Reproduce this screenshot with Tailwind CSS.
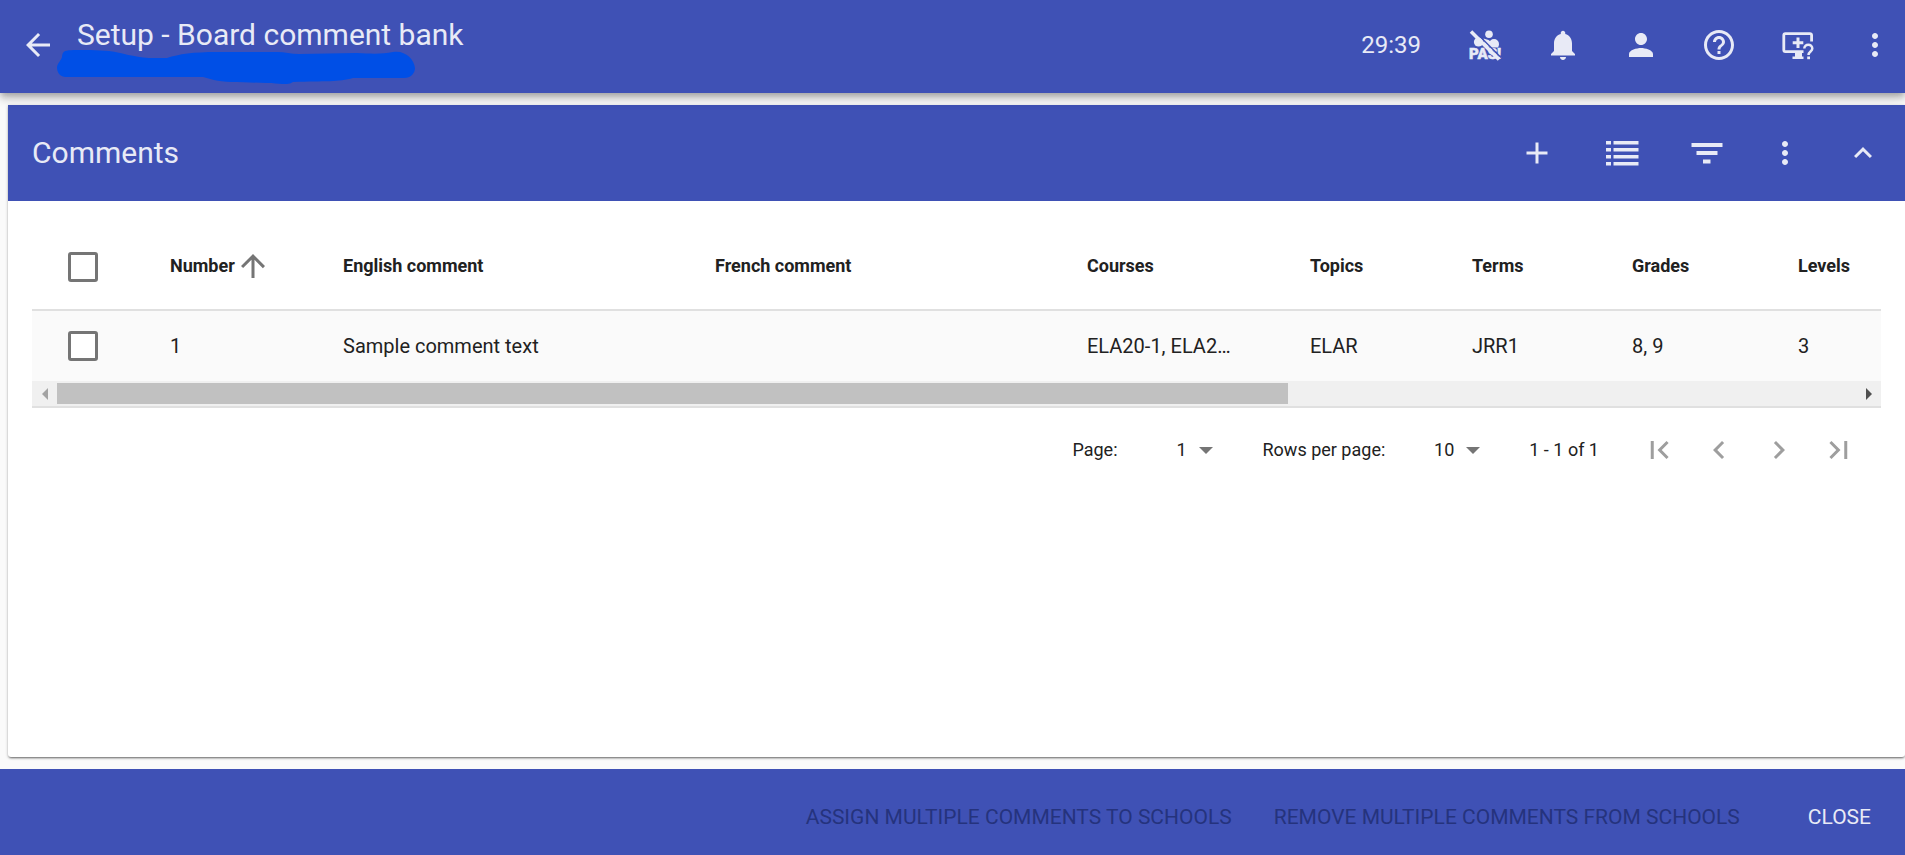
<!DOCTYPE html>
<html lang="en">
<head>
<meta charset="utf-8">
<meta name="viewport" content="width=device-width, initial-scale=1">
<title>Setup - Board comment bank</title>
<script src="https://cdn.jsdelivr.net/npm/@tailwindcss/browser@4"></script>
</head>
<body class="flex min-h-screen flex-col bg-[#fafafa] font-[Roboto,sans-serif] text-[#212121]">

<header class="relative z-10 flex h-[93px] shrink-0 items-center bg-[#3f51b5] pr-3 pb-1 pl-5 text-[#e8eaf6] shadow-[0_3px_6px_-1px_rgba(0,0,0,0.2),0_6px_8px_0_rgba(0,0,0,0.14),0_2px_15px_0_rgba(0,0,0,0.12)]">
  <button type="button" aria-label="Back" class="shrink-0">
    <svg class="size-9" viewBox="0 0 24 24" fill="currentColor"><path d="M20 11H7.830l5.590-5.590L12 4l-8 8 8 8 1.410-1.410L7.830 13H20v-2z"/></svg>
  </button>
  <div class="ml-[21px] self-start pt-[17px]">
    <h1 class="text-[30px] leading-9">Setup - Board comment bank</h1>
    <svg class="-mt-[3px] -ml-5 h-[34px] w-[358px]" viewBox="0 0 358 34" fill="#004fe6" aria-hidden="true"><path d="M8 1C16-1 38 0 52 1C66 3 76 7 92 8H110C122 4 136 2 160 2H220C228 2 234 4 242 4L300 3C316 4 326 4 336 2C348 0 357 9 358 18C358 23 354 28 347 28L296 28C282 32 268 31 236 32C230 36 222 33 210 33L180 32C164 32 156 30 146 27H8C2 26 0 22 0 17C1 12 4 11 5 7C5 4 6 2 8 1Z"/></svg>
  </div>
  <div class="ml-auto flex items-center gap-[42px]">
    <span class="mr-1 text-2xl">29:39</span>
    <button type="button" aria-label="PAS unavailable">
      <svg class="size-9 overflow-visible" viewBox="0 0 36 36" fill="currentColor">
        <circle cx="22" cy="7.300" r="3.800"/>
        <circle cx="11.500" cy="15" r="4.600"/>
        <path d="M16.500 11.500l5 1.500 3.500 2.500-1 4h-6z"/>
        <path d="M22 17a5 5 0 1 1 10 0c0 1.600-.5 2.500-1 3.500h-8z"/>
        <text x="2" y="31.500" font-size="15" font-weight="900" stroke="currentColor" stroke-width="0.500">PAS!</text>
        <path d="M6 2.500L34 30.500" stroke="#3f51b5" stroke-width="1.500"/>
        <path d="M4 4.500L32 32.500" stroke="currentColor" stroke-width="3.600"/>
      </svg>
    </button>
    <button type="button" aria-label="Notifications">
      <svg class="size-9" viewBox="0 0 24 24" fill="currentColor"><path d="M12 22c1.100 0 2-.9 2-2h-4c0 1.100.89 2 2 2zm6-6v-5c0-3.070-1.640-5.640-4.500-6.320V4c0-.83-.67-1.500-1.500-1.500s-1.500.67-1.500 1.500v.68C7.630 5.360 6 7.920 6 11v5l-2 2v1h16v-1l-2-2z"/></svg>
    </button>
    <button type="button" aria-label="Account">
      <svg class="size-9" viewBox="0 0 24 24" fill="currentColor"><path d="M12 12c2.210 0 4-1.790 4-4s-1.790-4-4-4-4 1.790-4 4 1.790 4 4 4zm0 2c-2.670 0-8 1.340-8 4v2h16v-2c0-2.660-5.330-4-8-4z"/></svg>
    </button>
    <button type="button" aria-label="Help">
      <svg class="size-9" viewBox="0 0 24 24" fill="currentColor"><path d="M11 18h2v-2h-2v2zm1-16C6.480 2 2 6.480 2 12s4.480 10 10 10 10-4.480 10-10S17.520 2 12 2zm0 18c-4.410 0-8-3.590-8-8s3.590-8 8-8 8 3.590 8 8-3.590 8-8 8zm0-14c-2.210 0-4 1.790-4 4h2c0-1.100.9-2 2-2s2 .9 2 2c0 2-3 1.750-3 5h2c0-2.250 3-2.500 3-5 0-2.210-1.790-4-4-4z"/></svg>
    </button>
    <button type="button" aria-label="Remote support">
      <svg class="size-9" viewBox="0 0 36 36" fill="none" stroke="currentColor">
        <path d="M32.600 14.500V8.200a1.600 1.600 0 0 0-1.600-1.600H6.400a1.600 1.600 0 0 0-1.600 1.600V23a1.600 1.600 0 0 0 1.600 1.600H24.500" stroke-width="2.800"/>
        <path d="M19 10.500v10.600M13.700 15.800h10.600" stroke-width="3"/>
        <path d="M16 25h7v4.500h1.500V32h-11v-2.500H16z" fill="currentColor" stroke="none"/>
        <path d="M25.300 21.500c0-5 8-5 8 0 0 3-3.800 3-3.800 6.600" stroke-width="2.500"/>
        <path d="M28.200 29.500h2.800v2.700h-2.800z" fill="currentColor" stroke="none"/>
      </svg>
    </button>
    <button type="button" aria-label="More options">
      <svg class="size-9" viewBox="0 0 24 24" fill="currentColor"><path d="M12 8c1.100 0 2-.9 2-2s-.9-2-2-2-2 .9-2 2 .9 2 2 2zm0 2c-1.100 0-2 .9-2 2s.9 2 2 2 2-.9 2-2-.9-2-2-2zm0 6c-1.100 0-2 .9-2 2s.9 2 2 2 2-.9 2-2-.9-2-2-2z"/></svg>
    </button>
  </div>
</header>

<main class="flex grow flex-col pt-3 pb-3 pl-2">
  <section class="grow rounded-b-[3px] bg-white shadow-[0_2px_2px_-1px_rgba(0,0,0,0.4),0_1px_3px_0_rgba(0,0,0,0.3)]">
    <div class="flex h-24 items-center bg-[#3f51b5] px-6 text-[#e8eaf6]">
      <h2 class="text-[30px] leading-9">Comments</h2>
      <div class="ml-auto flex items-center gap-[42px]">
        <button type="button" aria-label="Add comment" class="mr-[7px]">
          <svg class="size-9" viewBox="0 0 24 24" fill="currentColor"><path d="M19 13h-6v6h-2v-6H5v-2h6V5h2v6h6v2z"/></svg>
        </button>
        <button type="button" aria-label="List view" class="mr-[7px]">
          <svg class="size-9" viewBox="0 0 36 36" fill="currentColor"><path d="M2 6h5v3.500H2zM9.500 6h25v3.500h-25zM2 13h5v3.500H2zM9.500 13h25v3.500h-25zM2 20h5v3.500H2zM9.500 20h25v3.500h-25zM2 27h5v3.500H2zM9.500 27h25v3.500h-25z"/></svg>
        </button>
        <button type="button" aria-label="Filter">
          <svg class="size-9" viewBox="0 0 36 36" fill="currentColor"><path d="M2.500 8h31v4h-31zM7.500 16h21v4h-21zM14 24.500h7.500v4H14z"/></svg>
        </button>
        <button type="button" aria-label="More comment options">
          <svg class="size-9" viewBox="0 0 24 24" fill="currentColor"><path d="M12 8c1.100 0 2-.9 2-2s-.9-2-2-2-2 .9-2 2 .9 2 2 2zm0 2c-1.100 0-2 .9-2 2s.9 2 2 2 2-.9 2-2-.9-2-2-2zm0 6c-1.100 0-2 .9-2 2s.9 2 2 2 2-.9 2-2-.9-2-2-2z"/></svg>
        </button>
        <button type="button" aria-label="Collapse">
          <svg class="size-9" viewBox="0 0 24 24" fill="currentColor"><path d="M12 8l-6 6 1.410 1.410L12 10.830l4.590 4.580L18 14z"/></svg>
        </button>
      </div>
    </div>

    <div class="p-6 pb-0">
      <div class="overflow-hidden">
        <table class="w-full table-fixed text-left">
          <colgroup>
            <col class="w-[138px]"><col class="w-[173px]"><col class="w-[372px]"><col class="w-[372px]"><col class="w-[223px]"><col class="w-[162px]"><col class="w-[160px]"><col class="w-[166px]"><col>
          </colgroup>
          <thead>
            <tr class="h-[85px] border-b-2 border-[#e0e0e0] text-lg">
              <th class="pl-9"><input type="checkbox" aria-label="Select all comments" class="block size-[30px] appearance-none rounded-[3px] border-3 border-[#757575] bg-white"></th>
              <th class="pb-[2px] font-bold">
                <button type="button" class="flex items-center font-bold">Number
                  <svg class="size-9" viewBox="0 0 24 24" fill="#757575"><path d="M4 12l1.410 1.410L11 7.830V20h2V7.830l5.580 5.590L20 12l-8-8-8 8z"/></svg>
                </button>
              </th>
              <th class="pb-[2px] font-bold">English comment</th>
              <th class="pb-[2px] font-bold">French comment</th>
              <th class="pb-[2px] font-bold">Courses</th>
              <th class="pb-[2px] font-bold">Topics</th>
              <th class="pb-[2px] font-bold">Terms</th>
              <th class="pb-[2px] font-bold">Grades</th>
              <th class="pb-[2px] font-bold">Levels</th>
            </tr>
          </thead>
          <tbody>
            <tr class="h-[71px] bg-[#fafafa] text-xl">
              <td class="pl-9"><input type="checkbox" aria-label="Select comment 1" class="block size-[30px] appearance-none rounded-[3px] border-3 border-[#757575] bg-white"></td>
              <td>1</td>
              <td>Sample comment text</td>
              <td></td>
              <td>ELA20-1, ELA2…</td>
              <td>ELAR</td>
              <td>JRR1</td>
              <td>8, 9</td>
              <td>3</td>
            </tr>
          </tbody>
        </table>
      </div>
      <div class="flex h-[27px] items-center border-b-2 border-[#e0e0e0] bg-[#f0f0f0]">
        <button type="button" aria-label="Scroll left" class="flex w-[25px] shrink-0 justify-center"><svg class="h-3 w-[6px]" viewBox="0 0 6 12" fill="#a3a3a3"><path d="M6 0v12L0 6z"/></svg></button>
        <div class="h-[21px] grow"><div class="h-full w-[68.4%] bg-[#c1c1c1]"></div></div>
        <button type="button" aria-label="Scroll right" class="flex w-[25px] shrink-0 justify-center"><svg class="h-3 w-[6px]" viewBox="0 0 6 12" fill="#505050"><path d="M0 0v12l6-6z"/></svg></button>
      </div>

      <nav aria-label="Pagination" class="flex h-[84px] items-center justify-end pr-3 text-lg">
        <label for="page">Page:</label>
        <div class="relative ml-[35px]">
          <select id="page" class="w-[60px] appearance-none bg-transparent pr-[26px] [text-align-last:right]"><option>1</option></select>
          <svg class="pointer-events-none absolute top-1/2 right-0 -mt-[3px] h-[7px] w-[14px]" viewBox="0 0 14 7" fill="#757575"><path d="M0 0h14L7 7z"/></svg>
        </div>
        <label for="rows" class="ml-[50px]">Rows per page:</label>
        <div class="relative ml-[35px]">
          <select id="rows" class="w-[60px] appearance-none bg-transparent pr-[26px] [text-align-last:right]"><option>10</option></select>
          <svg class="pointer-events-none absolute top-1/2 right-0 -mt-[3px] h-[7px] w-[14px]" viewBox="0 0 14 7" fill="#757575"><path d="M0 0h14L7 7z"/></svg>
        </div>
        <span class="mr-[30px] ml-[49px]">1 - 1 of 1</span>
        <button type="button" aria-label="First page" class="flex w-15 justify-center text-[#9e9e9e]"><svg class="size-9" viewBox="0 0 24 24" fill="currentColor"><path d="M18.410 16.590L13.820 12l4.590-4.590L17 6l-6 6 6 6zM6.500 6h2v12h-2z"/></svg></button>
        <button type="button" aria-label="Previous page" class="flex w-15 justify-center text-[#9e9e9e]"><svg class="size-9" viewBox="0 0 24 24" fill="currentColor"><path d="M15.410 7.410L14 6l-6 6 6 6 1.410-1.410L10.830 12z"/></svg></button>
        <button type="button" aria-label="Next page" class="flex w-15 justify-center text-[#9e9e9e]"><svg class="size-9" viewBox="0 0 24 24" fill="currentColor"><path d="M10 6L8.590 7.410 13.170 12l-4.580 4.590L10 18l6-6z"/></svg></button>
        <button type="button" aria-label="Last page" class="flex w-15 justify-center text-[#9e9e9e]"><svg class="size-9" viewBox="0 0 24 24" fill="currentColor"><path d="M5.590 7.410L10.180 12l-4.590 4.590L7 18l6-6-6-6zM15.500 6h2v12h-2z"/></svg></button>
      </nav>
    </div>
  </section>
</main>

<footer class="flex h-[86px] shrink-0 items-center justify-end bg-[#3f51b5] pt-3 pr-[34px] text-[21px]">
  <button type="button" disabled class="mr-[42px] text-[#25337d]">ASSIGN MULTIPLE COMMENTS TO SCHOOLS</button>
  <button type="button" disabled class="mr-[68px] text-[#25337d]">REMOVE MULTIPLE COMMENTS FROM SCHOOLS</button>
  <button type="button" class="text-[#e8eaf6]">CLOSE</button>
</footer>
</body>
</html>
